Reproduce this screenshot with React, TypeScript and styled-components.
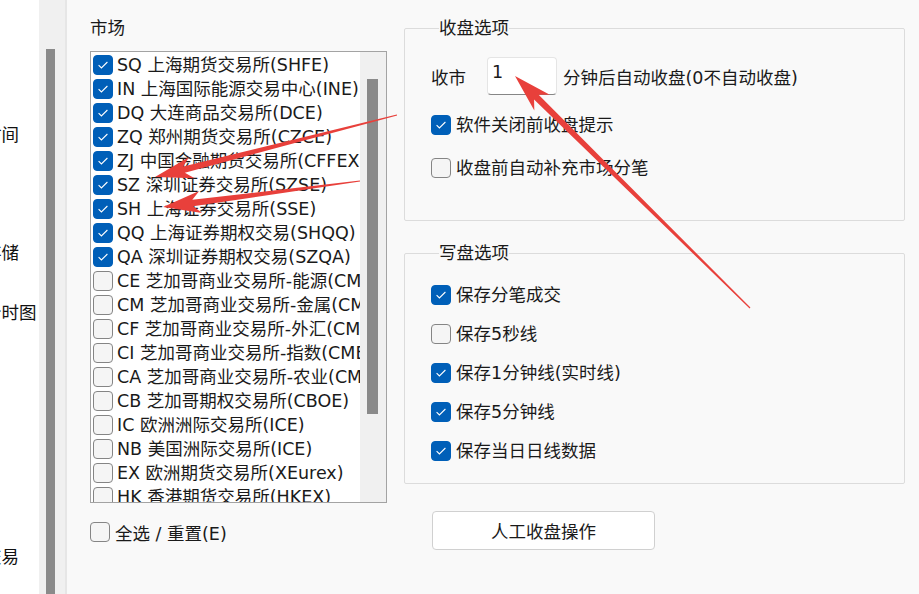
import React from "react";
import styled, {createGlobalStyle} from "styled-components";

const GlobalStyle = createGlobalStyle`
  html, body {
    margin: 0;
    padding: 0;
  }

  body {
    font-family: "DejaVu Sans", "Noto Sans CJK SC", sans-serif;
    font-size: 17.5px;
    color: #1a1a1a;
    background: #f9f9f9;
  }
`;

const Page = styled.div`
  position: relative;
  display: flex;
  width: 919px;
  height: 594px;
  overflow: hidden;
`;

const NavColumn = styled.nav`
  width: 39px;
  flex-shrink: 0;
  background: #fff;
  overflow: hidden;
`;

const NavItem = styled.div<{ $top: number }>`
  margin-top: ${p => p.$top}px;
  margin-left: -51px;
  height: 24px;
  line-height: 24px;
  white-space: nowrap;
  color: #111;
`;

const PageScroll = styled.div`
  width: 28px;
  flex-shrink: 0;
  padding: 49px 10px 0 7px;
  box-sizing: border-box;
  background: #f0f0f0;
  border-right: 2px solid #e6e6e6;
`;

const Thumb = styled.div<{ $height: number }>`
  height: ${p => p.$height}px;
  background: #8a8a8a;
`;

const Main = styled.main`
  flex: 1;
  display: flex;
  gap: 17px;
  padding: 16px 14px 0 23px;
`;

const LeftCol = styled.section`
  width: 297px;
  flex-shrink: 0;
  display: flex;
  flex-direction: column;
`;

const Caption = styled.div`
  height: 24px;
  line-height: 24px;
  margin-bottom: 11px;
`;

const ListBox = styled.div`
  height: 452px;
  box-sizing: border-box;
  border: 1px solid #a3a3a3;
  background: #fff;
  display: grid;
  grid-template-columns: 1fr 26px;
`;

const Items = styled.ul`
  margin: 0;
  padding: 1px 0 0 2px;
  list-style: none;
  overflow: hidden;
`;

const Row = styled.li<{ $gap?: number }>`
  display: flex;
  align-items: center;
  gap: ${p => p.$gap ?? 4}px;
  height: 24px;
  line-height: 24px;
  white-space: nowrap;
`;

const ListScroll = styled.div`
  background: #f0f0f0;
  padding: 27px 8px 0 7px;
`;

const SelectAll = styled.label`
  display: flex;
  align-items: center;
  gap: 5px;
  height: 24px;
  margin-top: 17px;
`;

const RightCol = styled.section`
  width: 501px;
  flex-shrink: 0;
  display: flex;
  flex-direction: column;
`;

const Group = styled.fieldset<{ $pad: string }>`
  margin: 0;
  min-width: 0;
  padding: ${p => p.$pad};
  border: 1px solid #dcdcdc;
  border-radius: 2px;

  & + & {
    margin-top: 20px;
  }

  legend {
    margin-left: 8px;
    padding: 0;
    height: 24px;
    line-height: 24px;
  }
`;

const Stack = styled.div<{ $gap: number; $top?: number }>`
  display: flex;
  flex-direction: column;
  gap: ${p => p.$gap}px;
  margin-top: ${p => p.$top ?? 0}px;
`;

const InputRow = styled.div`
  display: flex;
  align-items: center;
  height: 38px;

  span:first-child {
    width: 56px;
  }

  span:last-child {
    margin-left: 6px;
  }
`;

const NumberBox = styled.input`
  width: 70px;
  height: 38px;
  box-sizing: border-box;
  margin: 0;
  padding: 0 0 9px 4px;
  border: 1px solid #e5e5e5;
  border-bottom-color: #868686;
  border-radius: 4px;
  background: #fff;
  font: inherit;
  color: #1a1a1a;
  outline: none;
`;

const Box = styled.span<{ $checked: boolean }>`
  width: 20px;
  height: 20px;
  flex-shrink: 0;
  box-sizing: border-box;
  border-radius: 4px;
  border: 1px solid ${p => p.$checked ? '#005fb8' : '#858585'};
  background: ${p => p.$checked ? '#005fb8' : '#f5f5f5'};
  display: flex;
  align-items: center;
  justify-content: center;
`;

const ActionButton = styled.button`
  width: 223px;
  height: 39px;
  margin: 27px 0 0 28px;
  border: 1px solid #d0d0d0;
  border-radius: 4px;
  background: #fff;
  font: inherit;
  color: #1a1a1a;
`;

const Overlay = styled.svg`
  position: absolute;
  left: 0;
  top: 0;
  pointer-events: none;
`;

const CheckBox: React.FC<{ checked: boolean }> = ({checked}) => (
    <Box $checked={checked}>
        {checked && (
            <svg width="12" height="10" viewBox="0 0 12 10">
                <path d="M1.6 5.2 L4.4 8 L10.4 2" fill="none" stroke="#fff" strokeWidth="1.1"/>
            </svg>
        )}
    </Box>
);

const markets: [string, boolean][] = [
    ['SQ 上海期货交易所(SHFE)', true],
    ['IN 上海国际能源交易中心(INE)', true],
    ['DQ 大连商品交易所(DCE)', true],
    ['ZQ 郑州期货交易所(CZCE)', true],
    ['ZJ 中国金融期货交易所(CFFEX)', true],
    ['SZ 深圳证券交易所(SZSE)', true],
    ['SH 上海证券交易所(SSE)', true],
    ['QQ 上海证券期权交易(SHQQ)', true],
    ['QA 深圳证券期权交易(SZQA)', true],
    ['CE 芝加哥商业交易所-能源(CME)', false],
    ['CM 芝加哥商业交易所-金属(CME)', false],
    ['CF 芝加哥商业交易所-外汇(CME)', false],
    ['CI 芝加哥商业交易所-指数(CME)', false],
    ['CA 芝加哥商业交易所-农业(CME)', false],
    ['CB 芝加哥期权交易所(CBOE)', false],
    ['IC 欧洲洲际交易所(ICE)', false],
    ['NB 美国洲际交易所(ICE)', false],
    ['EX 欧洲期货交易所(XEurex)', false],
    ['HK 香港期货交易所(HKEX)', false],
];

const writeOptions: [string, boolean][] = [
    ['保存分笔成交', true],
    ['保存5秒线', false],
    ['保存1分钟线(实时线)', true],
    ['保存5分钟线', true],
    ['保存当日日线数据', true],
];

// tapered red arrow: tip first, tail second
const arrowPoints = (tx: number, ty: number, sx: number, sy: number) => {
    const len = Math.hypot(sx - tx, sy - ty);
    const ux = (sx - tx) / len, uy = (sy - ty) / len;
    const nx = -uy, ny = ux;
    const head = 38, headW = 22, neck = 30, shaft = 6.5, tail = 1.2;
    const pt = (d: number, w: number) => `${tx + ux * d + nx * w},${ty + uy * d + ny * w}`;
    return [
        pt(0, 0),
        pt(head, headW / 2),
        pt(neck, shaft / 2),
        pt(len, tail / 2),
        pt(len, -tail / 2),
        pt(neck, -shaft / 2),
        pt(head, -headW / 2),
    ].join(' ');
};

const App: React.FC = () => (
    <Page>
        <GlobalStyle/>
        <NavColumn>
            <NavItem $top={123}>收盘时间</NavItem>
            <NavItem $top={94}>数据存储</NavItem>
            <NavItem $top={36}>历史分时图</NavItem>
            <NavItem $top={220}>模拟交易</NavItem>
        </NavColumn>
        <PageScroll>
            <Thumb $height={560}/>
        </PageScroll>
        <Main>
            <LeftCol>
                <Caption>市场</Caption>
                <ListBox>
                    <Items>
                        {markets.map(([name, on]) => (
                            <Row key={name}>
                                <CheckBox checked={on}/>
                                <span>{name}</span>
                            </Row>
                        ))}
                    </Items>
                    <ListScroll>
                        <Thumb $height={335}/>
                    </ListScroll>
                </ListBox>
                <SelectAll>
                    <CheckBox checked={false}/>
                    <span>全选 / 重置(E)</span>
                </SelectAll>
            </LeftCol>
            <RightCol>
                <Group $pad="17px 20px 40px 26px">
                    <legend>收盘选项</legend>
                    <InputRow>
                        <span>收市</span>
                        <NumberBox readOnly defaultValue="1"/>
                        <span>分钟后自动收盘(0不自动收盘)</span>
                    </InputRow>
                    <Stack $gap={19} $top={18}>
                        <Row $gap={5}>
                            <CheckBox checked={true}/>
                            <span>软件关闭前收盘提示</span>
                        </Row>
                        <Row $gap={5}>
                            <CheckBox checked={false}/>
                            <span>收盘前自动补充市场分笔</span>
                        </Row>
                    </Stack>
                </Group>
                <Group $pad="18px 20px 20px 26px">
                    <legend>写盘选项</legend>
                    <Stack $gap={15}>
                        {writeOptions.map(([label, on]) => (
                            <Row key={label} $gap={5}>
                                <CheckBox checked={on}/>
                                <span>{label}</span>
                            </Row>
                        ))}
                    </Stack>
                </Group>
                <div>
                    <ActionButton>人工收盘操作</ActionButton>
                </div>
            </RightCol>
        </Main>
        <Overlay width="919" height="594">
            <polygon points={arrowPoints(155, 177, 397, 115)} fill="#e8403b"/>
            <polygon points={arrowPoints(163, 207, 360, 181)} fill="#e8403b"/>
            <polygon points={arrowPoints(515, 76, 750, 308)} fill="#e8403b"/>
        </Overlay>
    </Page>
);

export default App;
